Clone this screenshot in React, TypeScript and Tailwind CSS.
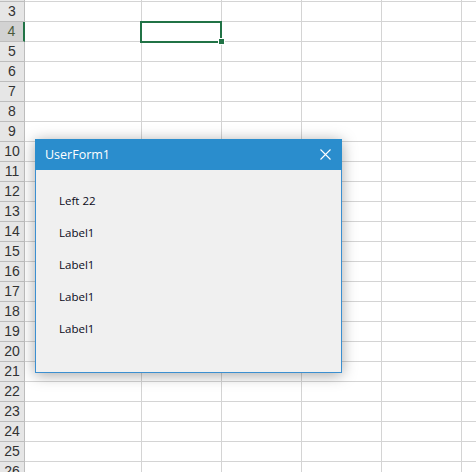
import React from "react";

const rows = Array.from({ length: 25 }, (_, i) => i + 2);
const columns = [117, 80, 80, 80, 80, 80];

function CloseIcon() {
  return (
    <svg width="11" height="11" viewBox="0 0 11 11" className="block">
      <path d="M0.5 0.5 L10.5 10.5 M10.5 0.5 L0.5 10.5" stroke="#ffffff" strokeWidth="1.1" fill="none" />
    </svg>
  );
}

function UserForm() {
  const labels = ["Left 22", "Label1", "Label1", "Label1", "Label1"];

  return (
    <div className="absolute left-[35px] top-[139px] w-[307px] h-[234px] flex flex-col border border-[#3b8fd0] bg-[#f0f0f0] shadow-[0_2px_14px_rgba(0,0,0,0.35)] font-['Open_Sans',sans-serif]">
      <div className="h-[31px] -mx-px -mt-px bg-[#2a8dcd] flex items-center justify-between pl-[10px] pr-[11px]">
        <span className="text-[12.5px] text-white leading-none pt-px">UserForm1</span>
        <CloseIcon />
      </div>
      <div className="flex flex-col gap-[16px] pt-[23px] pl-[23px]">
        {labels.map((label, labelIndex) => (
          <div key={labelIndex} className="h-[16px] text-[11.5px] leading-[16px] text-[#0a0a1a]">
            {label}
          </div>
        ))}
      </div>
    </div>
  );
}

export default function App() {
  return (
    <div className="relative w-[476px] h-[472px] overflow-hidden bg-white">
      <div className="-mt-[18px] flex flex-col">
        {rows.map((row) => (
          <div key={row} className="flex h-[20px]">
            <div
              className={`w-[25px] shrink-0 border-r border-b border-[#bdbdbd] flex items-center justify-center text-[14px] font-['Liberation_Sans',sans-serif] ${
                row === 4 ? "bg-[#d2d2d2] text-[#4a5a3a] border-r-2 border-r-[#217346]" : "bg-[#e6e6e6] text-[#333333]"
              }`}
            >
              {/* row 2 sits almost fully above the window, its number is not visible */}
              {row > 2 ? row : null}
            </div>
            {columns.map((width, columnIndex) => (
              <div
                key={columnIndex}
                style={{ width }}
                className="shrink-0 border-r border-b border-[#d4d4d4]"
              />
            ))}
          </div>
        ))}
      </div>

      {/* selected cell */}
      <div className="absolute left-[140px] top-[21px] w-[82px] h-[22px] border-2 border-[#217346]" />
      <div className="absolute left-[218px] top-[38px] w-[7px] h-[7px] bg-[#217346] border border-white" />

      <UserForm />
    </div>
  );
}
